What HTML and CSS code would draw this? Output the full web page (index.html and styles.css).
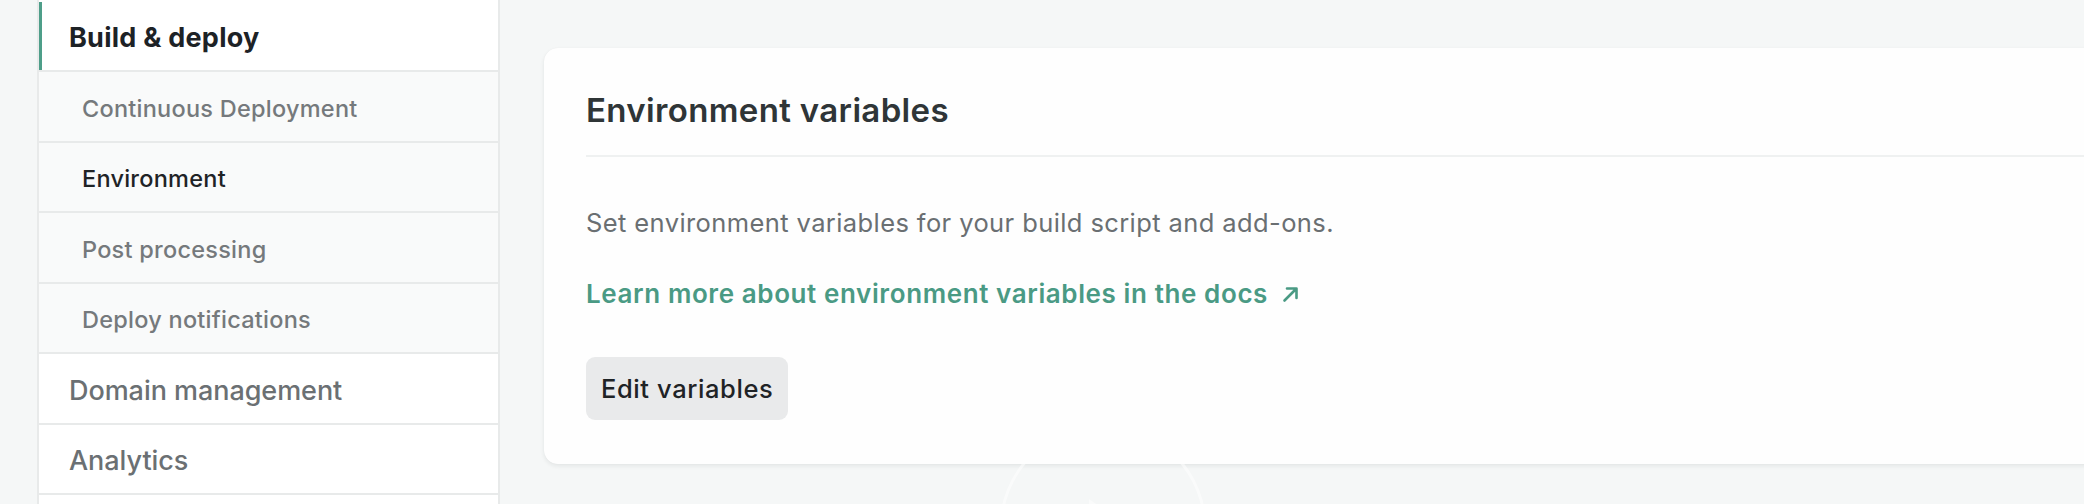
FILE: index.html
```html
<!DOCTYPE html>
<html lang="en">
<head>
<meta charset="utf-8">
<title>Build &amp; deploy – Environment</title>
<link rel="stylesheet" href="styles.css">
</head>
<body>
<div class="page">
  <nav class="sidenav">
    <a class="nav-item top active">Build &amp; deploy</a>
    <a class="nav-item sub">Continuous Deployment</a>
    <a class="nav-item sub current">Environment</a>
    <a class="nav-item sub">Post processing</a>
    <a class="nav-item sub">Deploy notifications</a>
    <a class="nav-item top">Domain management</a>
    <a class="nav-item top">Analytics</a>
  </nav>
  <main class="content">
    <section class="card">
      <h2 class="card-title">Environment variables</h2>
      <div class="card-body">
        <p class="desc">Set environment variables for your build script and add-ons.</p>
        <a class="docs-link">Learn more about environment variables in the docs<svg class="arrow" width="17" height="17" viewBox="0 0 17 17" aria-hidden="true"><path d="M2.5 14.5 L14 3 M5 2.5 H14.5 V12" fill="none" stroke="currentColor" stroke-width="2.6" stroke-linecap="round" stroke-linejoin="round"/></svg></a>
        <button class="btn">Edit variables</button>
      </div>
    </section>
  </main>
</div>
<svg class="play-overlay" width="220" height="220" viewBox="0 0 220 220" aria-hidden="true">
  <circle cx="110" cy="110" r="102" fill="none" stroke="#ffffff" stroke-width="3"/>
  <path d="M96 81 L138 110 L96 139 Z" fill="#ffffff"/>
</svg>
</body>
</html>
```
FILE: styles.css
```css
html, body {
  margin: 0;
  padding: 0;
  height: 504px;
  overflow: hidden;
  background: #f5f7f7;
  font-family: Inter, "Liberation Sans", sans-serif;
}

.page {
  display: flex;
  align-items: flex-start;
  gap: 44px;
  padding-left: 37px;
}

.sidenav {
  width: 463px;
  height: 560px;
  flex: none;
  display: flex;
  flex-direction: column;
  box-sizing: border-box;
  padding-top: 1.5px;
  background: #ffffff;
  border-left: 2px solid #e8eaea;
  border-right: 2px solid #e8eaea;
}

.nav-item {
  box-sizing: border-box;
  height: 70.5px;
  flex: none;
  display: flex;
  align-items: center;
  padding-top: 4px;
  border-bottom: 2px solid #e8eaea;
  text-decoration: none;
  background: #ffffff;
}

.nav-item.top {
  padding-left: 30px;
  font-size: 27px;
  font-weight: 500;
  color: #6b7073;
  letter-spacing: -0.05px;
}

.nav-item.top.active {
  font-weight: 700;
  color: #1d2226;
  letter-spacing: 0.25px;
  box-shadow: inset 3px 0 0 #4e9e89;
}

.nav-item.sub {
  padding-left: 43px;
  font-size: 23.5px;
  font-weight: 500;
  color: #75797c;
  letter-spacing: 0.25px;
  background: #f9fafa;
}

.nav-item.sub.current {
  color: #1f2326;
}

.content {
  flex: none;
  width: 1600px;
  padding-top: 48px;
}

.card {
  background: #fefefe;
  border-radius: 14px;
  box-shadow: 0 2px 4px rgba(30, 40, 40, 0.08), 0 0 1px rgba(30, 40, 40, 0.06);
  padding: 42px 0 44px 42px;
}

.card-title {
  margin: 0;
  font-size: 33px;
  line-height: 40px;
  font-weight: 600;
  color: #2f3537;
  letter-spacing: 0.35px;
  padding-bottom: 25px;
  border-bottom: 2px solid #eff1f1;
}

.card-body {
  display: flex;
  flex-direction: column;
  align-items: flex-start;
  padding-top: 48px;
}

.desc {
  margin: 0;
  font-size: 25.5px;
  line-height: 36px;
  color: #6a6f72;
  letter-spacing: 0.4px;
}

.docs-link {
  margin-top: 35px;
  display: flex;
  align-items: center;
  font-size: 26px;
  line-height: 36px;
  font-weight: 600;
  color: #4a9a84;
  letter-spacing: 0.6px;
}

.arrow {
  margin-left: 14px;
  margin-top: 1px;
  flex: none;
}

.btn {
  margin-top: 45px;
  height: 63px;
  padding: 0 15px;
  border: none;
  border-radius: 9px;
  background: #e9eaeb;
  font-family: inherit;
  font-size: 25.5px;
  font-weight: 500;
  color: #1f2326;
  letter-spacing: 0.6px;
}

.play-overlay {
  position: absolute;
  left: 993px;
  top: 418px;
  opacity: 0.55;
  pointer-events: none;
}
```
